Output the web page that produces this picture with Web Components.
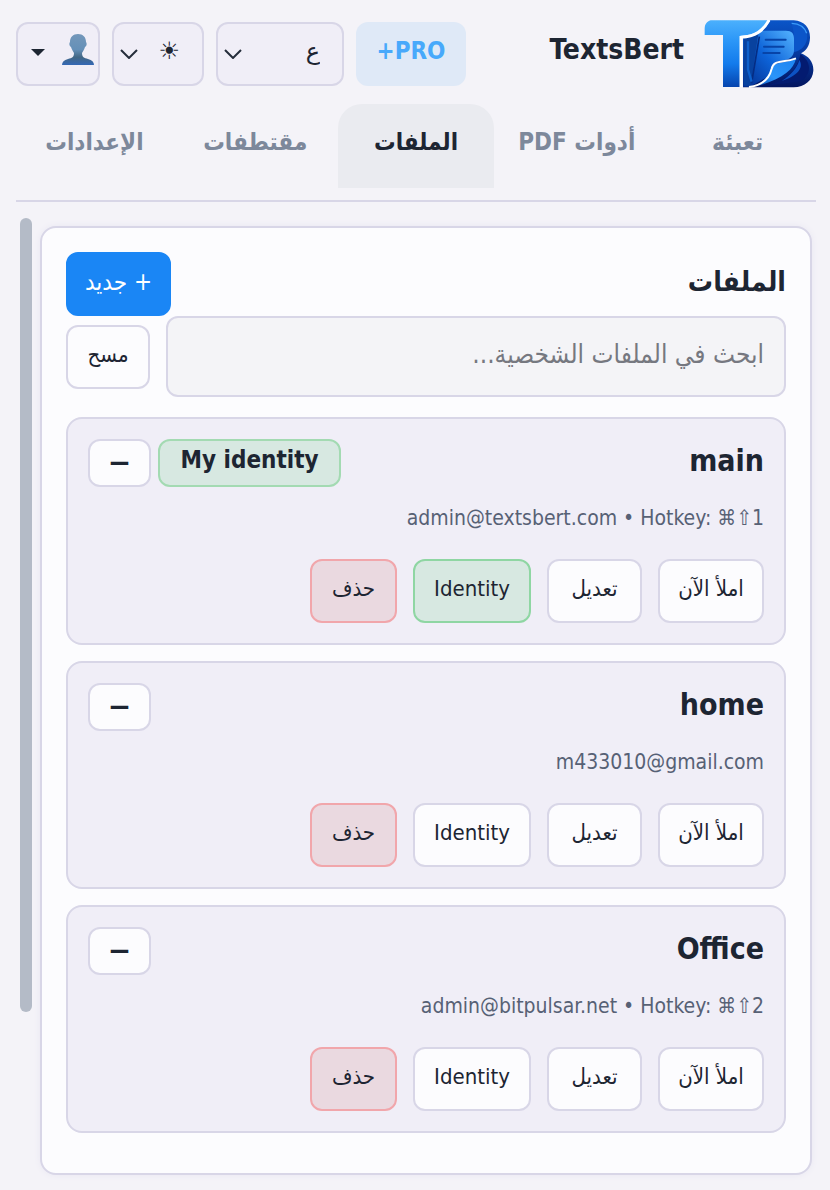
<!DOCTYPE html>
<html lang="ar" dir="rtl">
<head>
<meta charset="utf-8">
<meta name="viewport" content="width=device-width, initial-scale=1">
<title>TextsBert</title>
<style>
  :root {
    --page: #f4f3f8;
    --surface: #fcfcfe;
    --soft: #f0eef7;
    --line: #d8d6e7;
    --ink: #1d2532;
    --muted: #7d889b;
    --meta: #576175;
    --latin: "DejaVu Sans Condensed", "DejaVu Sans", "Noto Sans", sans-serif;
  }
  body {
    margin: 0;
    background: var(--page);
    color: var(--ink);
    font: 22px/32px var(--latin);
  }
</style>
</head>
<body>
<texts-app></texts-app>
<script>
const define = (name, html, setup) => {
  const template = document.createElement('template');
  template.innerHTML = html;
  customElements.define(name, class extends HTMLElement {
    constructor() {
      super();
      this.attachShadow({ mode: 'open' }).append(template.content.cloneNode(true));
    }
    connectedCallback() { if (setup) setup(this, this.shadowRoot); }
  });
};

define('brand-logo', `
<style>:host{display:block;flex:none} svg{display:block;width:110px;height:69px}</style>
<svg viewBox="495 58 330 207" role="img" aria-label="TextsBert">
  <defs>
    <linearGradient id="t" x1="0" y1="0" x2="0" y2="1"><stop offset="0" stop-color="#4bb0fd"/><stop offset=".3" stop-color="#2c97f8"/><stop offset=".65" stop-color="#137bec"/><stop offset="1" stop-color="#0644ae"/></linearGradient>
    <linearGradient id="b" x1="0" y1="0" x2="0" y2="1"><stop offset="0" stop-color="#0a55c8"/><stop offset=".5" stop-color="#06389d"/><stop offset="1" stop-color="#03155f"/></linearGradient>
    <linearGradient id="d" x1="1" y1="0" x2="0" y2="1"><stop offset="0" stop-color="#55b4ff"/><stop offset=".5" stop-color="#0d63d8"/><stop offset="1" stop-color="#032c8c"/></linearGradient>
    <linearGradient id="f" x1="1" y1="0" x2="0" y2="1"><stop offset="0" stop-color="#1c83f0"/><stop offset=".6" stop-color="#2b95fa"/><stop offset="1" stop-color="#0644ae"/></linearGradient>
  </defs>
  <path d="M694 62H764C798 64 814 87 813 115C812 139 801 154 786 161C809 170 824 187 823 213C821 242 797 262 764 263H612V115C650 112 676 92 694 62Z" fill="url(#b)"/>
  <path d="M758 70C792 72 808 92 804 119C800 142 781 156 762 158L764 99Z" fill="#0b55c9"/>
  <path d="M758 71C783 72 797 83 803 101" fill="none" stroke="#3b9bf8" stroke-width="4"/>
  <path d="M612 117C638 112 654 106 669 93H738C758 92 765 101 765 117V152C765 171 751 183 722 184C699 186 703 211 681 234L632 262H612Z" fill="url(#d)"/>
  <path d="M614 119L658 104L634 258H614Z" fill="#08429f"/>
  <path d="M661 111L638 249" stroke="#052d83" stroke-width="5"/>
  <path d="M627 125V210L638 246" fill="none" stroke="#0e61cc" stroke-width="7"/>
  <path d="M680 120H740M675 141H734M673 160H722" stroke="#0744a8" stroke-width="6" stroke-linecap="round"/>
  <path d="M784 164C818 184 818 225 788 242C765 251 731 250 681 260C732 243 774 221 784 164Z" fill="#031b70"/>
  <path d="M781 181C796 205 774 229 728 244C757 225 773 207 781 181Z" fill="#0c52c4"/>
  <path d="M771 176C765 213 723 242 644 262C680 246 690 221 702 199C717 185 746 191 771 176Z" fill="url(#f)"/>
  <path d="M630 262C669 257 691 236 698 207C704 179 731 191 771 176" fill="none" stroke="#fff" stroke-width="6"/>
  <path d="M515 62H688C671 92 645 107 604 109V262H552V106H497V86C498 73 503 66 515 62Z" fill="url(#t)"/>
  <path d="M690 62C672 94 649 110 606 113V262" fill="none" stroke="#fff" stroke-width="9"/>
</svg>`);

define('account-button', `
<style>
  :host{display:block}
  button{box-sizing:border-box;width:84px;height:64px;display:flex;align-items:center;justify-content:space-between;direction:ltr;padding:0 4px 8px 12px;border:2px solid var(--line);border-radius:12px;background:var(--soft)}
  svg{display:block}
  .caret{margin-top:6px}
</style>
<button type="button" aria-label="الحساب">
  <svg class="caret" width="16" height="8" viewBox="0 0 16 8"><path d="M1 0H15L8 7Z" fill="#1d2532"/></svg>
  <svg width="32" height="33" viewBox="0 0 32 33">
    <defs><linearGradient id="p" x1="0" y1="0" x2="0" y2="1"><stop offset="0" stop-color="#7397ba"/><stop offset=".5" stop-color="#6590b8"/><stop offset=".75" stop-color="#426785"/><stop offset="1" stop-color="#3468b5"/></linearGradient></defs>
    <path d="M16 1C21 1 24 4 24 9C25 10 25 13 23 14C22 17 21 18 20 20C20 24 22 25 26 26C30 27 32 29 32 32H0C0 29 2 27 6 26C10 25 12 24 12 20C11 18 10 17 9 14C7 13 7 10 8 9C8 4 11 1 16 1Z" fill="url(#p)"/>
  </svg>
</button>`);

define('pick-list', `
<style>
  :host{display:grid;align-items:center}
  select,svg{grid-area:1/1}
  select{box-sizing:border-box;width:100%;height:64px;appearance:none;margin:0;padding:0 22px 6px 8px;border:2px solid var(--line);border-radius:12px;background:var(--soft);color:var(--ink);font:24px/32px "DejaVu Sans",sans-serif}
  svg{justify-self:end;margin-left:8px;pointer-events:none}
</style>
<select></select>
<svg width="18" height="10" viewBox="0 0 18 10" aria-hidden="true"><path d="M1 1L9 9L17 1" fill="none" stroke="#252d3b" stroke-width="2"/></svg>`,
(host, root) => {
  const select = root.querySelector('select');
  select.setAttribute('aria-label', host.getAttribute('label'));
  select.append(new Option(host.getAttribute('value')));
});

define('app-header', `
<style>
  :host{display:flex;align-items:center;gap:12px}
  brand-logo{margin-left:8px}
  h1{margin:0 0 8px;flex:1;font-size:28px;line-height:40px}
  .lang{width:128px}
  .theme{width:92px}
  .pro{box-sizing:border-box;width:110px;height:64px;margin:0;padding:0 0 6px;border:0;border-radius:12px;background:#dfe9f7;color:#48a9fb;font:bold 24px/32px var(--latin)}
</style>
<brand-logo></brand-logo>
<h1>TextsBert</h1>
<button class="pro" type="button">PRO+</button>
<pick-list class="lang" label="اللغة" value="ع"></pick-list>
<pick-list class="theme" label="المظهر" value="☀"></pick-list>
<account-button></account-button>`);

define('tab-bar', `
<style>
  :host{display:block;border-bottom:2px solid var(--line);padding-bottom:12px}
  nav{display:grid;grid-template-columns:repeat(5,1fr);gap:4px}
  a{box-sizing:border-box;height:84px;padding-top:22px;text-align:center;text-decoration:none;white-space:nowrap;color:var(--muted);font-weight:bold;font-size:24px;border-radius:24px 24px 0 0}
  a[aria-current]{background:#eaebf0;color:var(--ink)}
</style>
<nav>
  <a href="#fill">تعبئة</a>
  <a href="#pdf">أدوات PDF</a>
  <a href="#profiles" aria-current="page">الملفات</a>
  <a href="#snippets">مقتطفات</a>
  <a href="#settings">الإعدادات</a>
</nav>`);

define('ui-button', `
<style>
  :host{display:block;flex:none}
  button{box-sizing:border-box;width:100%;height:64px;margin:0;padding:0 0 4px;border:2px solid var(--line);border-radius:12px;background:var(--surface);color:var(--ink);font:22px/32px var(--latin);white-space:nowrap}
  :host([kind=primary]) button{background:#1a86f5;border-color:#1a86f5;color:#fff;font-size:24px}
  :host([kind=green]) button{background:#d7e8e1;border-color:#8fd6a3}
  :host([kind=red]) button{background:#ead9e0;border-color:#f1a6ab}
  :host([kind=small]) button{height:48px;padding:0;font:bold 28px/32px "DejaVu Sans",sans-serif}
</style>
<button type="button"><slot></slot></button>`);

define('profile-card', `
<style>
  :host{display:block;border:2px solid var(--line);border-radius:16px;background:var(--soft);padding:20px}
  header{display:flex;gap:7px;height:48px}
  h3{flex:1;margin:0;font-size:30px;line-height:44px}
  .badge{box-sizing:border-box;width:183px;border:2px solid #a3dab2;border-radius:12px;background:#d7e8e1;text-align:center;font-weight:bold;font-size:24px;line-height:38px}
  .badge[hidden]{display:none}
  .fold{width:63px}
  p{margin:0;padding:15px 0 25px;color:var(--meta);direction:ltr;text-align:right;font-size:21px}
  footer{display:flex;gap:16px}
  .fill{width:106px}.edit{width:95px}.id{width:118px}.del{width:87px}
</style>
<header>
  <h3><slot name="name"></slot></h3>
  <span class="badge" dir="ltr">My identity</span>
  <ui-button class="fold" kind="small">−</ui-button>
</header>
<p><slot></slot></p>
<footer>
  <ui-button class="fill">املأ الآن</ui-button>
  <ui-button class="edit">تعديل</ui-button>
  <ui-button class="id">Identity</ui-button>
  <ui-button class="del" kind="red">حذف</ui-button>
</footer>`,
(host, root) => {
  const mine = host.hasAttribute('mine');
  root.querySelector('.badge').hidden = !mine;
  if (mine) root.querySelector('.id').setAttribute('kind', 'green');
});

define('profiles-panel', `
<style>
  :host{display:block;border:2px solid var(--line);border-radius:16px;background:var(--surface);padding:24px 24px 40px;box-shadow:0 0 6px #e9e7f2}
  .head{display:flex;justify-content:space-between}
  h2{margin:0;font-size:28px;line-height:60px}
  .new{width:105px}
  .search{display:flex;align-items:center;gap:16px;margin-bottom:20px}
  input{box-sizing:border-box;flex:1;min-width:0;height:81px;margin:0;padding:0 20px 6px;border:2px solid var(--line);border-radius:12px;background:#f4f4f7;color:var(--ink);font:26px/32px var(--latin)}
  input::placeholder{color:#767880;opacity:1}
  .clear{width:84px}
  .list{display:grid;gap:16px}
</style>
<div class="head">
  <h2>الملفات</h2>
  <ui-button class="new" kind="primary">+ جديد</ui-button>
</div>
<div class="search">
  <input type="text" aria-label="بحث" placeholder="ابحث في الملفات الشخصية...">
  <ui-button class="clear">مسح</ui-button>
</div>
<div class="list">
  <profile-card mine><span slot="name">main</span>admin@textsbert.com • Hotkey: ⌘⇧1</profile-card>
  <profile-card><span slot="name">home</span>m433010@gmail.com</profile-card>
  <profile-card><span slot="name">Office</span>admin@bitpulsar.net • Hotkey: ⌘⇧2</profile-card>
</div>`);

define('scroll-rail', `
<style>
  :host{display:block;width:12px;flex:none}
  div{height:83%;border-radius:6px;background:#b4bbc7}
</style>
<div></div>`);

define('texts-app', `
<style>
  :host{display:block;padding:19px 14px 15px 16px}
  app-header{padding:0 2px 16px 0}
  main{display:flex;gap:8px;padding:16px 4px 0}
  profiles-panel{flex:1;min-width:0;margin-top:8px}
</style>
<app-header></app-header>
<tab-bar></tab-bar>
<main>
  <profiles-panel></profiles-panel>
  <scroll-rail></scroll-rail>
</main>`);
</script>
</body>
</html>
